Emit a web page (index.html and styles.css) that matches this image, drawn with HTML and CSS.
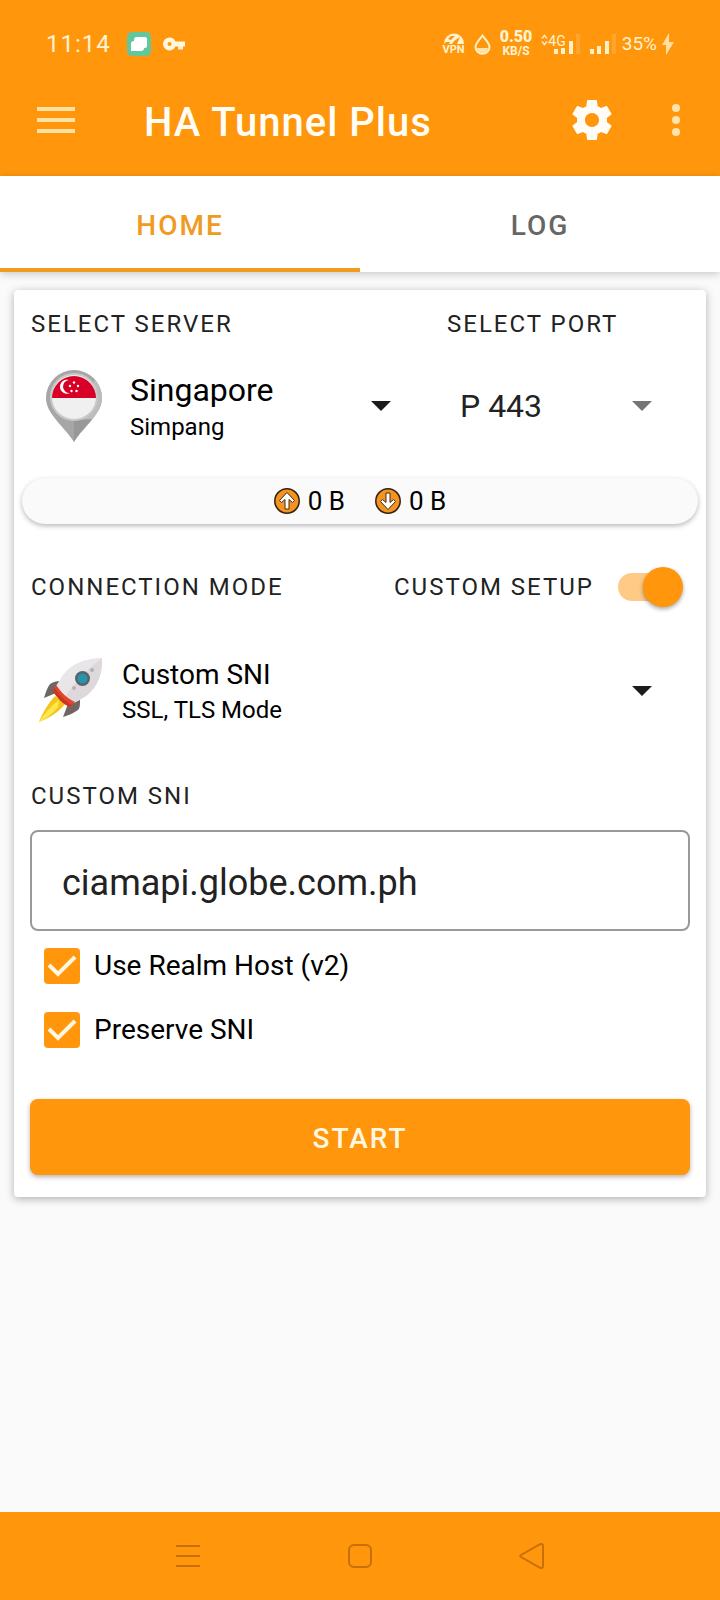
FILE: index.html
```html
<!DOCTYPE html>
<html lang="en">
<head>
    <meta charset="UTF-8">
    <meta name="viewport" content="width=device-width, initial-scale=1">
    <title>HA Tunnel Plus</title>
    <link rel="stylesheet" href="styles.css">
</head>
<body>

<header class="top">
    <div class="status-bar">
        <div class="status-left">
            <span class="clock">11:14</span>
            <svg width="24" height="24" viewBox="0 0 24 24">
                <rect width="24" height="24" rx="5" fill="#62c79b"/>
                <path d="M9 5h9q2 0 2 2v7q0 2-2 2h-1q0 3-3 3H4v-7q0-3 3-3 0-4 2-4z" fill="#fff"/>
            </svg>
            <svg class="key" width="22" height="14" viewBox="0 0 22 14">
                <path fill-rule="evenodd" d="M6.500.5a6.500 6.500 0 1 0 6 9H15v3h5V9.500h2v-5h-9.500a6.500 6.500 0 0 0-6-4zm0 4.500a2 2 0 1 1 0 4 2 2 0 0 1 0-4z" fill="#fff6dc"/>
            </svg>
        </div>
        <div class="status-right">
            <div class="vpn">
                <svg width="20" height="11" viewBox="0 0 20 11">
                    <path d="M0 11a10 10.500 0 0 1 20 0h-7l3-7-6 4-2 3H5l1-2H2z" fill="#fff3cf"/>
                    <path d="M4 6l3-3 4 0-4 4z" fill="#ff960c"/>
                </svg>
                <span>VPN</span>
            </div>
            <svg width="17" height="21" viewBox="0 0 17 21">
                <path d="M8.500 1.500C11 5 15.500 9 15.500 13a7 6.800 0 0 1-14 0c0-4 4.500-8 7-11.500z" fill="none" stroke="#fff0c4" stroke-width="2"/>
                <path d="M3 14h11a5.500 5 0 0 1-11 0z" fill="#ffe2a6"/>
            </svg>
            <div class="speed"><b>0.50</b><span>KB/S</span></div>
            <div class="mobile">
                <svg width="7" height="12" viewBox="0 0 7 12"><path d="M1 4.500L3.500 1.500 6 4.500M1 7.500l2.500 3 2.500-3" fill="none" stroke="#ffe9b8" stroke-width="1.600"/></svg>
                <span>4G</span>
                <svg class="bars" width="27" height="20" viewBox="0 0 27 20">
                    <path d="M0 15h4v5H0zM7 14h4v6H7zM15 7h4v13h-4z" fill="#fff0c8"/>
                    <path d="M22 0h4v20h-4z" fill="#ffa52e"/>
                </svg>
            </div>
            <svg width="27" height="20" viewBox="0 0 27 20">
                <path d="M0 15h4v5H0zM7 12h4v8H7zM15 7h4v13h-4z" fill="#fff0c8"/>
                <path d="M22 0h4v20h-4z" fill="#ffa52e"/>
            </svg>
            <span class="battery">35%</span>
            <svg width="12" height="22" viewBox="0 0 12 22"><path d="M7 0L0 12h4l0 10 8-13H7z" fill="#ffe0a0"/></svg>
        </div>
    </div>

    <div class="app-bar">
        <button class="icon-btn" aria-label="Menu">
            <svg width="38" height="26" viewBox="0 0 38 26"><path d="M0 2h38M0 13h38M0 24h38" stroke="#ffe0a3" stroke-width="4"/></svg>
        </button>
        <h1>HA Tunnel Plus</h1>
        <button class="icon-btn" aria-label="Settings">
            <svg width="48" height="48" viewBox="0 0 24 24"><path fill="#fffdf5" d="M19.430 12.980c.04-.32.07-.64.07-.98s-.03-.66-.07-.98l2.110-1.650c.19-.15.24-.42.12-.64l-2-3.460c-.12-.22-.39-.3-.61-.22l-2.490 1c-.52-.4-1.080-.73-1.690-.98l-.38-2.650C14.460 2.180 14.250 2 14 2h-4c-.25 0-.46.18-.49.42l-.38 2.650c-.61.25-1.170.59-1.690.98l-2.490-1c-.23-.09-.49 0-.61.22l-2 3.460c-.13.22-.07.49.12.64l2.110 1.650c-.04.32-.07.65-.07.98s.03.66.07.98l-2.110 1.650c-.19.15-.24.42-.12.64l2 3.460c.12.22.39.3.61.22l2.490-1c.52.4 1.080.73 1.690.98l.38 2.650c.03.24.24.42.49.42h4c.25 0 .46-.18.49-.42l.38-2.650c.61-.25 1.170-.59 1.690-.98l2.490 1c.23.09.49 0 .61-.22l2-3.460c.12-.22.07-.49-.12-.64l-2.110-1.650zM12 15.500c-1.930 0-3.500-1.570-3.500-3.500s1.570-3.500 3.500-3.500 3.500 1.570 3.500 3.500-1.570 3.500-3.500 3.500z"/></svg>
        </button>
        <button class="icon-btn more" aria-label="More options">
            <svg width="8" height="32" viewBox="0 0 8 32"><g fill="#ffe3ad"><circle cx="4" cy="4" r="4"/><circle cx="4" cy="16" r="4"/><circle cx="4" cy="28" r="4"/></g></svg>
        </button>
    </div>
</header>

<nav class="tabs">
    <button class="tab active">HOME</button>
    <button class="tab">LOG</button>
</nav>

<main>
    <form class="card" onsubmit="return false">
        <div class="columns">
            <div>
                <label class="caption" for="server">SELECT SERVER</label>
                <div class="picker server">
                    <svg width="56" height="72" viewBox="0 0 56 72">
                        <path d="M28 0A28 28 0 0 0 0 28c0 16 18 28 28 44 10-16 28-28 28-44A28 28 0 0 0 28 0z" fill="#a6a6a6"/>
                        <path d="M28 50v22c10-16 28-28 28-44 0-7-3-14-7-18z" fill="#bdbdbd"/>
                        <path d="M28 50v22c4-8 12-15 18-23z" fill="#989898"/>
                        <circle cx="28" cy="27" r="24" fill="#c9c9c9"/>
                        <circle cx="28" cy="27" r="22" fill="#f0f0f0"/>
                        <path d="M6 28a22 22 0 0 1 44 0z" fill="#d80027"/>
                        <path d="M23 10a7 7 0 1 0 1 13 6.500 6.500 0 0 1-1-13z" fill="#fff"/>
                        <g fill="#fff"><circle cx="28" cy="12.500" r="1.200"/><circle cx="24" cy="16" r="1.200"/><circle cx="32" cy="16" r="1.200"/><circle cx="25.500" cy="21" r="1.200"/><circle cx="30.500" cy="21" r="1.200"/></g>
                    </svg>
                    <div class="choice">
                        <select id="server" class="large"><option>Singapore</option></select>
                        <span>Simpang</span>
                    </div>
                    <svg class="arrow" width="20" height="10" viewBox="0 0 20 10"><path d="M0 0h20L10 10z"/></svg>
                </div>
            </div>
            <div>
                <label class="caption" for="port">SELECT PORT</label>
                <div class="picker port">
                    <div class="choice">
                        <select id="port" class="large"><option>P 443</option></select>
                    </div>
                    <svg class="arrow grey" width="20" height="10" viewBox="0 0 20 10"><path d="M0 0h20L10 10z"/></svg>
                </div>
            </div>
        </div>

        <div class="traffic">
            <span>
                <svg width="26" height="26" viewBox="0 0 26 26"><circle cx="13" cy="13" r="12.200" fill="#f39322" stroke="#33200f" stroke-width="1.500"/><path d="M13 4.500l7.500 8-2 2-3.500-3V21h-4v-9.500l-3.500 3-2-2z" fill="#fff" stroke="#4a2c10" stroke-width="1"/></svg>
                0 B
            </span>
            <span>
                <svg width="26" height="26" viewBox="0 0 26 26"><circle cx="13" cy="13" r="12.200" fill="#f39322" stroke="#33200f" stroke-width="1.500"/><path d="M13 21.500l7.500-8-2-2-3.500 3V5h-4v9.500l-3.500-3-2 2z" fill="#fff" stroke="#4a2c10" stroke-width="1"/></svg>
                0 B
            </span>
        </div>

        <div class="mode-head">
            <label class="caption" for="mode">CONNECTION MODE</label>
            <label class="caption switch-label" for="custom">CUSTOM SETUP</label>
            <input type="checkbox" id="custom" class="switch" checked>
        </div>

        <div class="picker mode">
            <svg width="66" height="66" viewBox="-1 0 66 66">
                <path d="M16 38C10 44 4 54 0 64c10-4 20-10 26-18z" fill="#f6c51c"/>
                <path d="M20 42C12 48 5 56 0 64c7-3 14-9 19-15z" fill="#ffe94a"/>
                <path d="M22 23c-5 0-8 1-11 3-3 4-4 8-6 14l12-5z" fill="#6f6562"/>
                <path d="M41 42c0 5 0 8-2 10-4 3-9 5-15 7l5-13z" fill="#6f6562"/>
                <path d="M63 0C48 0 33 5 24 17l-7 11 18 17 12-7C59 29 64 14 63 0z" fill="#e9e6e9"/>
                <path d="M63 0C54 6 37 23 27 37l8 8 12-7C59 29 64 14 63 0z" fill="#dcd8dc"/>
                <path d="M17 27c5 7 11 13 19 17l-5 5c-7-3-13-9-17-16z" fill="#e5432a"/>
                <path d="M14 33l2-3c4 7 10 13 17 17l-2 2c-7-3-13-9-17-16z" fill="#c83622"/>
                <circle cx="43.500" cy="20.500" r="7.500" fill="#59626a"/>
                <circle cx="43.500" cy="20.500" r="5" fill="#2496ac"/>
                <circle cx="53" cy="12" r="2" fill="#b9aeb5"/>
                <circle cx="35" cy="30" r="2" fill="#c6aeb2"/>
            </svg>
            <div class="choice">
                <select id="mode"><option>Custom SNI</option></select>
                <span>SSL, TLS Mode</span>
            </div>
            <svg class="arrow" width="20" height="10" viewBox="0 0 20 10"><path d="M0 0h20L10 10z"/></svg>
        </div>

        <label class="caption" for="sni">CUSTOM SNI</label>
        <input type="text" id="sni" class="sni" value="ciamapi.globe.com.ph">

        <label class="check"><input type="checkbox" checked>Use Realm Host (v2)</label>
        <label class="check"><input type="checkbox" checked>Preserve SNI</label>

        <button class="start">START</button>
    </form>
</main>

<footer class="nav-bar">
    <button class="icon-btn" aria-label="Recent apps">
        <svg width="26" height="26" viewBox="0 0 26 26"><path d="M1 3h24M1 13h24M1 23h24"/></svg>
    </button>
    <button class="icon-btn" aria-label="Home">
        <svg width="26" height="26" viewBox="0 0 26 26"><rect x="2" y="2" width="22" height="22" rx="5"/></svg>
    </button>
    <button class="icon-btn" aria-label="Back">
        <svg width="26" height="26" viewBox="0 0 26 26"><path d="M2 12L21 1.200q3-1 3 1.800v20q0 2.800-3 1.800L2 14q-1.500-1 0-2z"/></svg>
    </button>
</footer>

</body>
</html>
```

FILE: styles.css
```css
* {
    box-sizing: border-box;
}

body {
    margin: 0;
    min-height: 100vh;
    display: flex;
    flex-direction: column;
    font-family: Roboto, "Liberation Sans", sans-serif;
    font-size: 24px;
    line-height: 28px;
    color: #000;
    background-color: #fafafa;
}

svg {
    display: block;
    flex-shrink: 0;
}

button, input, select {
    font-family: inherit;
    margin: 0;
}

.icon-btn {
    background: none;
    border: none;
    padding: 0;
    cursor: pointer;
}

/* Status bar + app bar */
.top {
    background-color: #ff960c;
}

.status-bar {
    height: 88px;
    padding: 0 46px;
    display: flex;
    justify-content: space-between;
    align-items: center;
    color: #fff3cf;
}

.status-left, .status-right {
    display: flex;
    align-items: center;
}

.clock {
    letter-spacing: 1px;
    margin-right: 16px;
}

.key {
    margin-left: 12px;
}

.status-right {
    gap: 9px;
}

.vpn, .speed {
    display: flex;
    flex-direction: column;
    align-items: center;
    font-size: 11px;
    font-weight: 700;
    line-height: 12px;
}

.speed {
    font-size: 12px;
}

.speed b {
    font-size: 16px;
}

/* the two lines share a 28px tall block */
.speed b, .speed span {
    line-height: 14px;
}

.mobile {
    display: flex;
    align-items: flex-start;
    font-size: 14px;
    line-height: 14px;
}

.mobile .bars {
    margin-left: -12px;
}

.battery {
    font-size: 19px;
    margin: 0 -4px;
}

.app-bar {
    height: 88px;
    padding: 0 40px 24px 37px;
    display: flex;
    align-items: center;
}

.app-bar h1 {
    flex: 1;
    margin: 0;
    padding: 6px 0 0 69px;
    font-size: 40px;
    font-weight: 500;
    line-height: 48px;
    letter-spacing: 1px;
    color: #fffdf5;
}

.more {
    margin-left: 56px;
}

/* Tabs */
.tabs {
    display: flex;
    background-color: #fff;
    box-shadow: 0 2px 8px rgba(0,0,0,0.2);
}

.tab {
    flex: 1;
    height: 96px;
    padding: 6px 0 0;
    border: none;
    border-bottom: 4px solid transparent;
    background: none;
    font-size: 28px;
    font-weight: 500;
    letter-spacing: 2px;
    color: #666;
    cursor: pointer;
}

.tab.active {
    color: #f09a20;
    border-bottom-color: #f09a20;
}

/* Card */
main {
    flex: 1;
    padding: 18px 14px;
}

.card {
    padding: 20px 16px 22px;
    border-radius: 4px;
    background-color: #fff;
    box-shadow: 0 2px 8px rgba(0,0,0,0.3);
}

.caption {
    display: block;
    padding-left: 1px;
    letter-spacing: 2px;
    color: #222;
}

.columns {
    display: grid;
    grid-template-columns: 1fr 244px;
}

.picker {
    display: flex;
    align-items: center;
    height: 80px;
}

.picker.server {
    margin-top: 28px;
    padding: 0 55px 0 16px;
    gap: 28px;
}

.picker.port {
    margin-top: 28px;
    padding: 0 38px 0 14px;
}

.picker.mode {
    margin: 44px 0 51px;
    padding: 0 38px 0 8px;
    gap: 18px;
}

.choice {
    flex: 1;
    display: flex;
    flex-direction: column;
    gap: 4px;
}

.choice select {
    width: 100%;
    padding: 0;
    border: none;
    background: none;
    appearance: none;
    font-size: 28px;
    line-height: 34px;
    color: #000;
}

.choice select.large {
    font-size: 32px;
    line-height: 38px;
}

.port .choice select {
    color: #222;
}

.arrow {
    fill: #1c1c1c;
}

.arrow.grey {
    fill: #757575;
}

.traffic {
    display: flex;
    justify-content: center;
    gap: 30px;
    margin: 32px -8px 43px;
    padding: 8px 0;
    border-radius: 23px;
    background-color: #fafafa;
    box-shadow: 0 2px 5px rgba(0,0,0,0.28);
    font-size: 26px;
    line-height: 30px;
}

.traffic span {
    display: flex;
    align-items: center;
    gap: 8px;
}

.mode-head {
    display: flex;
    align-items: center;
}

.switch-label {
    margin-left: auto;
}

/* Switch: pale track with the knob on the right when checked */
.switch {
    appearance: none;
    position: relative;
    width: 65px;
    height: 40px;
    margin: 0 7px 0 24px;
    cursor: pointer;
}

.switch::before {
    content: "";
    position: absolute;
    left: 0;
    right: 7px;
    top: 6px;
    height: 28px;
    border-radius: 14px;
    background-color: #ffca85;
}

.switch::after {
    content: "";
    position: absolute;
    left: 0;
    top: 0;
    width: 40px;
    height: 40px;
    border-radius: 50%;
    background-color: #ff960c;
    box-shadow: 0 2px 4px rgba(0,0,0,0.35);
}

.switch:checked::after {
    left: auto;
    right: 0;
}

.sni {
    display: block;
    width: 100%;
    height: 101px;
    margin: 20px 0 3px;
    padding: 4px 30px 0;
    border: 2px solid #999;
    border-radius: 8px;
    background: none;
    font-size: 36px;
    color: #222;
}

.check {
    display: flex;
    align-items: center;
    height: 64px;
    padding-left: 14px;
    gap: 14px;
    font-size: 28px;
}

.check input {
    appearance: none;
    width: 36px;
    height: 36px;
    border-radius: 4px;
    border: 3px solid #757575;
}

.check input:checked {
    border: none;
    background: #ff960c url("data:image/svg+xml,%3Csvg xmlns='http://www.w3.org/2000/svg' viewBox='0 0 36 36'%3E%3Cpath d='M5 17l9 9L31 9' fill='none' stroke='%23fff8e0' stroke-width='4'/%3E%3C/svg%3E");
}

.start {
    display: block;
    width: 100%;
    height: 76px;
    margin-top: 37px;
    padding: 2px 0 0;
    border: none;
    border-radius: 8px;
    background-color: #ff960c;
    box-shadow: 0 2px 5px rgba(0,0,0,0.3);
    font-size: 28px;
    font-weight: 500;
    letter-spacing: 2px;
    color: #fff8e0;
    cursor: pointer;
}

/* Android navigation bar */
.nav-bar {
    display: flex;
    justify-content: space-between;
    align-items: center;
    height: 88px;
    padding: 0 175px;
    background-color: #ff960c;
}

.nav-bar svg {
    fill: none;
    stroke: #c87008;
    stroke-width: 2;
}
```
